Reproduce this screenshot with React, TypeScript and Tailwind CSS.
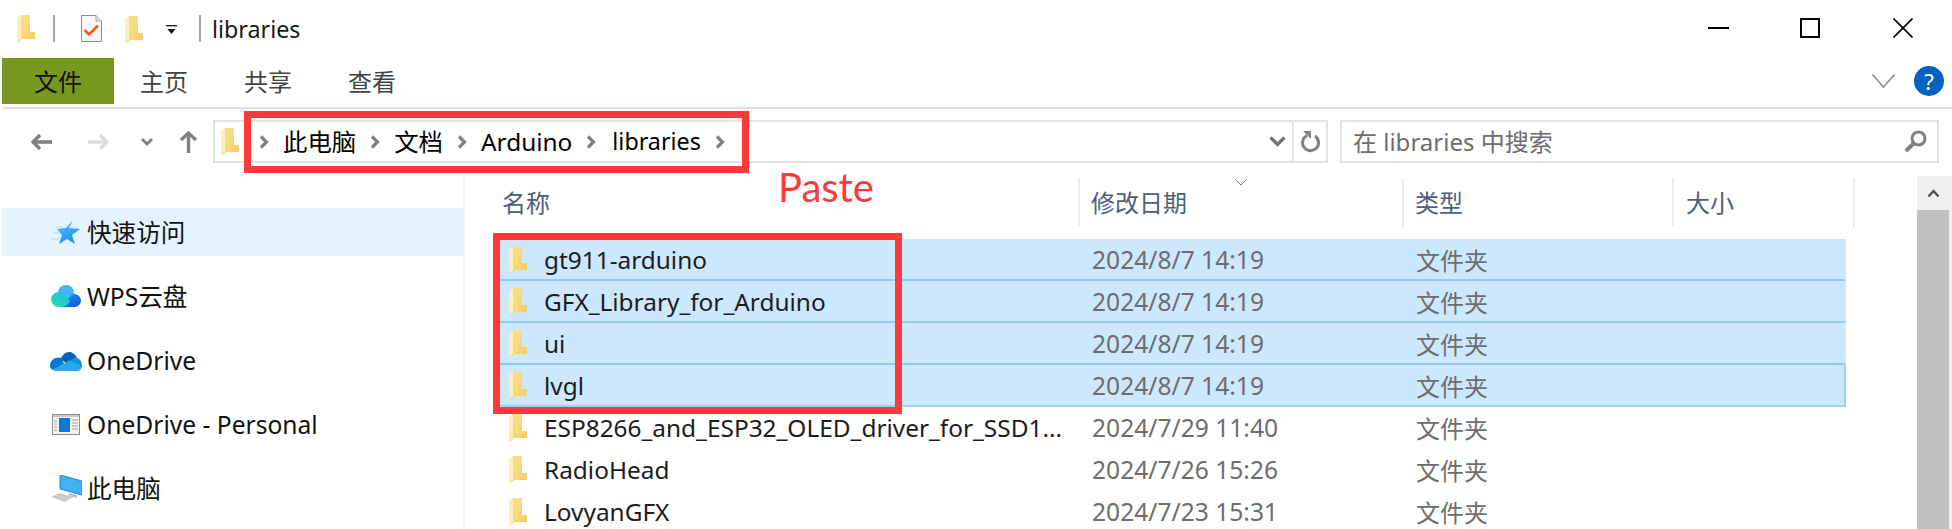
import type { ReactNode } from "react";

const Folder = ({ className = "" }: { className?: string }) => (
  <svg viewBox="0 0 18 27" width="18" height="27" className={className}>
    <defs>
      <linearGradient id="folderBody" x1="0" y1="0" x2="1" y2="0.6">
        <stop offset="0" stopColor="#fbe59a" />
        <stop offset="1" stopColor="#f4cf68" />
      </linearGradient>
    </defs>
    <path d="M3 0H13V17H18V24H4Z" fill="url(#folderBody)" />
    <path d="M0 2L5 1V24L1 27L0 26Z" fill="#fdeeb8" />
    <path d="M5 1V24L1 27" fill="none" stroke="#e9c665" strokeWidth="0.7" />
  </svg>
);

const Crumb = () => (
  <svg viewBox="0 0 10 14" width="10" height="14" className="shrink-0">
    <path d="M2 1.5L7.5 7L2 12.5" fill="none" stroke="#808080" strokeWidth="3.2" />
  </svg>
);

const NavIcon = {
  star: (
    <svg viewBox="0 0 30 26" width="30" height="26">
      <defs>
        <linearGradient id="starFill" x1="0" y1="0" x2="0.4" y2="1">
          <stop offset="0" stopColor="#5cc4fb" />
          <stop offset="1" stopColor="#1d93ee" />
        </linearGradient>
      </defs>
      <path d="M5 8H12M2 14H10M0 20H8" stroke="#a9dcfb" strokeWidth="1.2" />
      <path d="M22 1L18 9L29 10L21 16L24 25L16 20L8 25L11 16L6 10L15 9Z" fill="url(#starFill)" />
    </svg>
  ),
  wps: (
    <svg viewBox="0 0 30 22" width="30" height="22">
      <defs>
        <linearGradient id="wpsLeft" x1="0" y1="1" x2="1" y2="0">
          <stop offset="0" stopColor="#2be3a6" />
          <stop offset="1" stopColor="#22b5e9" />
        </linearGradient>
        <linearGradient id="wpsRight" x1="0" y1="0" x2="0.6" y2="1">
          <stop offset="0" stopColor="#2b8ff0" />
          <stop offset="1" stopColor="#0a5fe0" />
        </linearGradient>
      </defs>
      <circle cx="15" cy="8" r="8" fill="#3fb6fb" />
      <path d="M12 22H23.5A6.5 6.5 0 0 0 23.5 9C21 9 20 10 19 12L12 18Z" fill="url(#wpsRight)" />
      <path d="M7.5 22A7.5 7.5 0 0 1 7.5 7C11 7 13 9 15 12L19 16C17 20 14 22 10 22Z" fill="url(#wpsLeft)" />
    </svg>
  ),
  onedrive: (
    <svg viewBox="0 0 32 21" width="32" height="21">
      <path d="M11 9C13 2 22 -2 27 8L18 15Z" fill="#0364b8" />
      <path d="M12 8C6 6 0 10 0 15.5C0 17.5 1 19 3 20L14 14Z" fill="#0078d4" />
      <path d="M25 7.5C29 7.5 32 11 32 16L24 18L17 12Z" fill="#1490df" />
      <path d="M3 20C4 21 5 21 7 21H27C30 21 31.5 19 32 16L19 10.5Z" fill="#28a8ea" />
    </svg>
  ),
  window: (
    <svg viewBox="0 0 28 21" width="28" height="21">
      <rect x="0.5" y="0.5" width="27" height="20" fill="#f2f2f2" stroke="#8c8c8c" />
      <rect x="1" y="1" width="26" height="2" fill="#c8c8c8" />
      <rect x="7" y="4" width="11" height="14" fill="#0a78d7" />
      <path d="M2 7H5M2 10H5M2 13H5M2 16H5M20 6H26M20 9H26M20 12H26M20 15H26" stroke="#a3a3a3" />
    </svg>
  ),
  pc: (
    <svg viewBox="0 0 31 27" width="31" height="27">
      <path d="M9 0L31 6V20L9 14Z" fill="#3fb2f5" stroke="#2b86c8" />
      <path d="M18 18L26 20V23L17 21Z" fill="#b5c4ce" />
      <path d="M0 22L9 18L22 22L14 27Z" fill="#c9c9c9" />
    </svg>
  ),
  cube: (
    <svg viewBox="0 0 30 16" width="30" height="16">
      <path d="M15 0L30 7L15 14L0 7Z" fill="#74dbe9" />
      <path d="M0 7L15 14V16H0Z" fill="#3fc3dc" />
      <path d="M30 7L15 14V16H30Z" fill="#1b9fe0" />
    </svg>
  ),
};

const NavItem = ({
  icon,
  children,
  active,
}: {
  icon: ReactNode;
  children: ReactNode;
  active?: boolean;
}) => (
  <div className={`flex h-12 shrink-0 items-center pl-[48px] ${active ? "bg-[#e5f3ff]" : ""}`}>
    <div className="flex w-[32px] justify-center">{icon}</div>
    <span className="ml-[5px] pt-[2px] text-[24.6px] leading-none text-[#111]">{children}</span>
  </div>
);

const files = [
  { name: "gt911-arduino", date: "2024/8/7 14:19", state: "sel" },
  { name: "GFX_Library_for_Arduino", date: "2024/8/7 14:19", state: "sel" },
  { name: "ui", date: "2024/8/7 14:19", state: "sel" },
  { name: "lvgl", date: "2024/8/7 14:19", state: "focus" },
  { name: "ESP8266_and_ESP32_OLED_driver_for_SSD1...", date: "2024/7/29 11:40", state: "" },
  { name: "RadioHead", date: "2024/7/26 15:26", state: "" },
  { name: "LovyanGFX", date: "2024/7/23 15:31", state: "" },
];

const rowStyle = (state: string) => {
  if (state === "sel") return "bg-[#cce8ff] border-b-[#8fcaff]";
  if (state === "focus") return "bg-[#cce8ff] border-x-[#99d1ff] border-b-[#99d1ff]";
  return "";
};

export default function App() {
  return (
    <div className="relative h-[529px] w-[1952px] overflow-hidden bg-white font-['Noto_Sans','Noto_Sans_CJK_SC',sans-serif]">
      {/* title bar */}
      <div className="flex h-[58px] items-center pb-[2px]">
        <Folder className="ml-[17px]" />
        <div className="ml-[18px] h-[27px] w-[2px] bg-[#a6a6a6]" />
        <svg viewBox="0 0 21 27" width="21" height="27" className="ml-[26px]">
          <path d="M0.5 0.5H15L20.5 6V26.5H0.5Z" fill="#f6f7f8" stroke="#8c8c8c" />
          <path d="M15 0.5V6H20.5" fill="#e2e2e2" stroke="#a8a8a8" />
          <path d="M3.5 15L8 19.5L17 10.5" fill="none" stroke="#f25c1d" strokeWidth="2.6" />
        </svg>
        <Folder className="ml-[23px] mt-[2px]" />
        <svg viewBox="0 0 11 10" width="11" height="10" className="ml-[23px] mt-[4px]">
          <path d="M0 0.7H11" stroke="#111" strokeWidth="1.3" />
          <path d="M1.5 4H9.5L5.5 9Z" fill="#111" />
        </svg>
        <div className="ml-[22px] h-[27px] w-[2px] bg-[#a6a6a6]" />
        <span className="ml-[11px] pt-[3px] text-[23.3px] leading-none text-[#1a1a1a]">libraries</span>
        <div className="ml-auto mr-[39px] flex items-center">
          <div className="h-[2px] w-[21px] bg-black" />
          <div className="ml-[71px] h-[20px] w-[20px] border-2 border-black" />
          <svg viewBox="0 0 20 20" width="20" height="20" className="ml-[73px]">
            <path d="M0.5 0.5L19.5 19.5M19.5 0.5L0.5 19.5" stroke="#000" strokeWidth="1.6" />
          </svg>
        </div>
      </div>

      {/* ribbon tabs */}
      <div className="flex h-[46px] items-center text-[24px] leading-none text-[#444]">
        <div className="ml-[2px] flex h-full w-[112px] items-center justify-center bg-[#76981f] pt-[1px] text-[#111]">
          文件
        </div>
        <span className="ml-[26px] pt-[1px]">主页</span>
        <span className="ml-[56px] pt-[1px]">共享</span>
        <span className="ml-[56px] pt-[1px]">查看</span>
        <div className="ml-auto mr-[8px] flex items-center">
          <svg viewBox="0 0 23 14" width="23" height="14">
            <path d="M0.5 0.5L11.5 13L22.5 0.5" fill="none" stroke="#8f8f8f" strokeWidth="1.6" />
          </svg>
          <div className="ml-[19px] flex h-[30px] w-[30px] items-center justify-center rounded-full bg-[#0563c1] text-[22px] leading-none text-white">
            ?
          </div>
        </div>
      </div>

      <div className="ml-[2px] mt-[3px] h-[2px] bg-[#e0e0e0]" />

      {/* address row */}
      <div className="mt-[11px] flex h-[43px] items-center">
        <svg viewBox="0 0 22 18" width="22" height="18" className="ml-[30px]">
          <path d="M22 9H4M10 2L3 9L10 16" fill="none" stroke="#808080" strokeWidth="3.4" />
        </svg>
        <svg viewBox="0 0 22 18" width="22" height="18" className="ml-[36px]">
          <path d="M0 9H18M12 2L19 9L12 16" fill="none" stroke="#dcdcdc" strokeWidth="3.4" />
        </svg>
        <svg viewBox="0 0 12 8" width="12" height="8" className="ml-[31px]">
          <path d="M1 1L6 6L11 1" fill="none" stroke="#808080" strokeWidth="2.8" />
        </svg>
        <svg viewBox="0 0 19 23" width="19" height="23" className="ml-[26px]">
          <path d="M9.5 23V4M2 10L9.5 3L17 10" fill="none" stroke="#808080" strokeWidth="3.4" />
        </svg>

        <div className="ml-[15px] flex h-full w-[1115px] items-center border-2 border-[#e2e2e2] pl-[6px] text-[24.4px] leading-none text-black">
          <Folder />
          <div className="ml-[20px] flex items-center gap-[14px]">
            <Crumb />
            <span className="pt-[1px]">此电脑</span>
            <Crumb />
            <span className="pt-[1px]">文档</span>
            <Crumb />
            <span className="pt-[1px]">Arduino</span>
            <Crumb />
            <span className="ml-[2px] pt-[1px] text-[23.3px]">libraries</span>
            <Crumb />
          </div>
          <svg viewBox="0 0 17 11" width="17" height="11" className="ml-auto mr-[6px]">
            <path d="M1.5 1.5L8.5 8.5L15.5 1.5" fill="none" stroke="#707070" strokeWidth="3.2" />
          </svg>
          <div className="flex h-full w-[34px] items-center justify-center border-l-2 border-l-[#e2e2e2]">
            <svg viewBox="0 0 20 23" width="20" height="23">
              <path d="M7 5.5A8 8 0 1 0 15 6" fill="none" stroke="#808080" strokeWidth="3" />
              <path d="M3 1H11V9Z" fill="#808080" />
            </svg>
          </div>
        </div>

        <div className="ml-[12px] flex h-full w-[599px] items-center justify-between border-2 border-[#e2e2e2] pl-[11px] pr-[10px] text-[24px] leading-none text-[#6d6d6d]">
          <span className="pt-[1px]">在 libraries 中搜索</span>
          <svg viewBox="0 0 23 23" width="23" height="23">
            <circle cx="14.5" cy="8.5" r="6.5" fill="none" stroke="#808080" strokeWidth="3" />
            <path d="M10 13L2 21" stroke="#808080" strokeWidth="4" />
          </svg>
        </div>
      </div>

      {/* main */}
      <div className="mt-[13px] flex h-[353px]">
        <nav className="flex w-[463px] flex-col gap-4 overflow-hidden pl-[2px] pt-[32px]">
          <NavItem icon={NavIcon.star} active>
            快速访问
          </NavItem>
          <NavItem icon={NavIcon.wps}>WPS云盘</NavItem>
          <NavItem icon={NavIcon.onedrive}>OneDrive</NavItem>
          <NavItem icon={NavIcon.window}>OneDrive - Personal</NavItem>
          <NavItem icon={NavIcon.pc}>此电脑</NavItem>
          <div className="flex h-12 shrink-0 items-center pl-[65px]">
            <div className="flex w-[30px] justify-center">{NavIcon.cube}</div>
            <span className="ml-[8px] text-[24.6px] leading-none text-[#111]">3D 对象</span>
          </div>
        </nav>

        <div className="w-[2px] bg-[#f3f3f3]" />

        <div className="min-w-0 flex-1">
          <div className="flex h-[51px] items-center pt-[2px] text-[24px] leading-none text-[#4c607a]">
            <div className="flex h-full w-[615px] items-center border-r-2 border-r-[#ececec] pl-[37px]">名称</div>
            <div className="relative flex h-full w-[324px] items-center border-r-2 border-r-[#ececec] pl-[11px]">
              修改日期
              <svg viewBox="0 0 12 7" width="12" height="7" className="absolute left-[155px] top-[1px]">
                <path d="M0.5 0.5L6 6L11.5 0.5" fill="none" stroke="#7a7a7a" />
              </svg>
            </div>
            <div className="flex h-full w-[270px] items-center border-r-2 border-r-[#ececec] pl-[11px]">类型</div>
            <div className="flex h-full w-[181px] items-center border-r-2 border-r-[#ececec] pl-[12px]">大小</div>
          </div>

          <div className="ml-[32px] mt-[12px] w-[1349px]">
            {files.map((file) => (
              <div
                key={file.name}
                className={`flex h-[42px] items-center border-x-2 border-b-2 border-transparent ${rowStyle(file.state)}`}
              >
                <Folder className="ml-[10px] shrink-0" />
                <span className="ml-[17px] w-[548px] whitespace-nowrap pt-[3px] text-[24.4px] leading-none text-[#1c1c1c]">
                  {file.name}
                </span>
                <span className="w-[324px] whitespace-nowrap pt-[3px] text-[24.6px] leading-none text-[#6d6d6d]">
                  {file.date}
                </span>
                <span className="pt-[3px] text-[24px] leading-none text-[#6d6d6d]">文件夹</span>
              </div>
            ))}
          </div>
        </div>

        {/* scrollbar */}
        <div className="flex w-[35px] flex-col bg-[#f0f0f0] pr-[3px]">
          <div className="flex h-[34px] items-center justify-center">
            <svg viewBox="0 0 13 9" width="13" height="9">
              <path d="M1.5 7.5L6.5 2L11.5 7.5" fill="none" stroke="#505050" strokeWidth="2.4" />
            </svg>
          </div>
          <div className="flex-1 bg-[#c0c0c0]" />
        </div>
      </div>

      {/* annotations */}
      <div className="absolute left-[244px] top-[111px] h-[62px] w-[505px] border-[7px] border-[#ff3838]" />
      <div className="absolute left-[493px] top-[233px] h-[181px] w-[409px] border-[7px] border-[#ff3838]" />
      <span className="absolute left-[778px] top-[163px] font-['Lato',sans-serif] text-[40px] leading-[48px] text-[#ff3838]">
        Paste
      </span>
    </div>
  );
}
